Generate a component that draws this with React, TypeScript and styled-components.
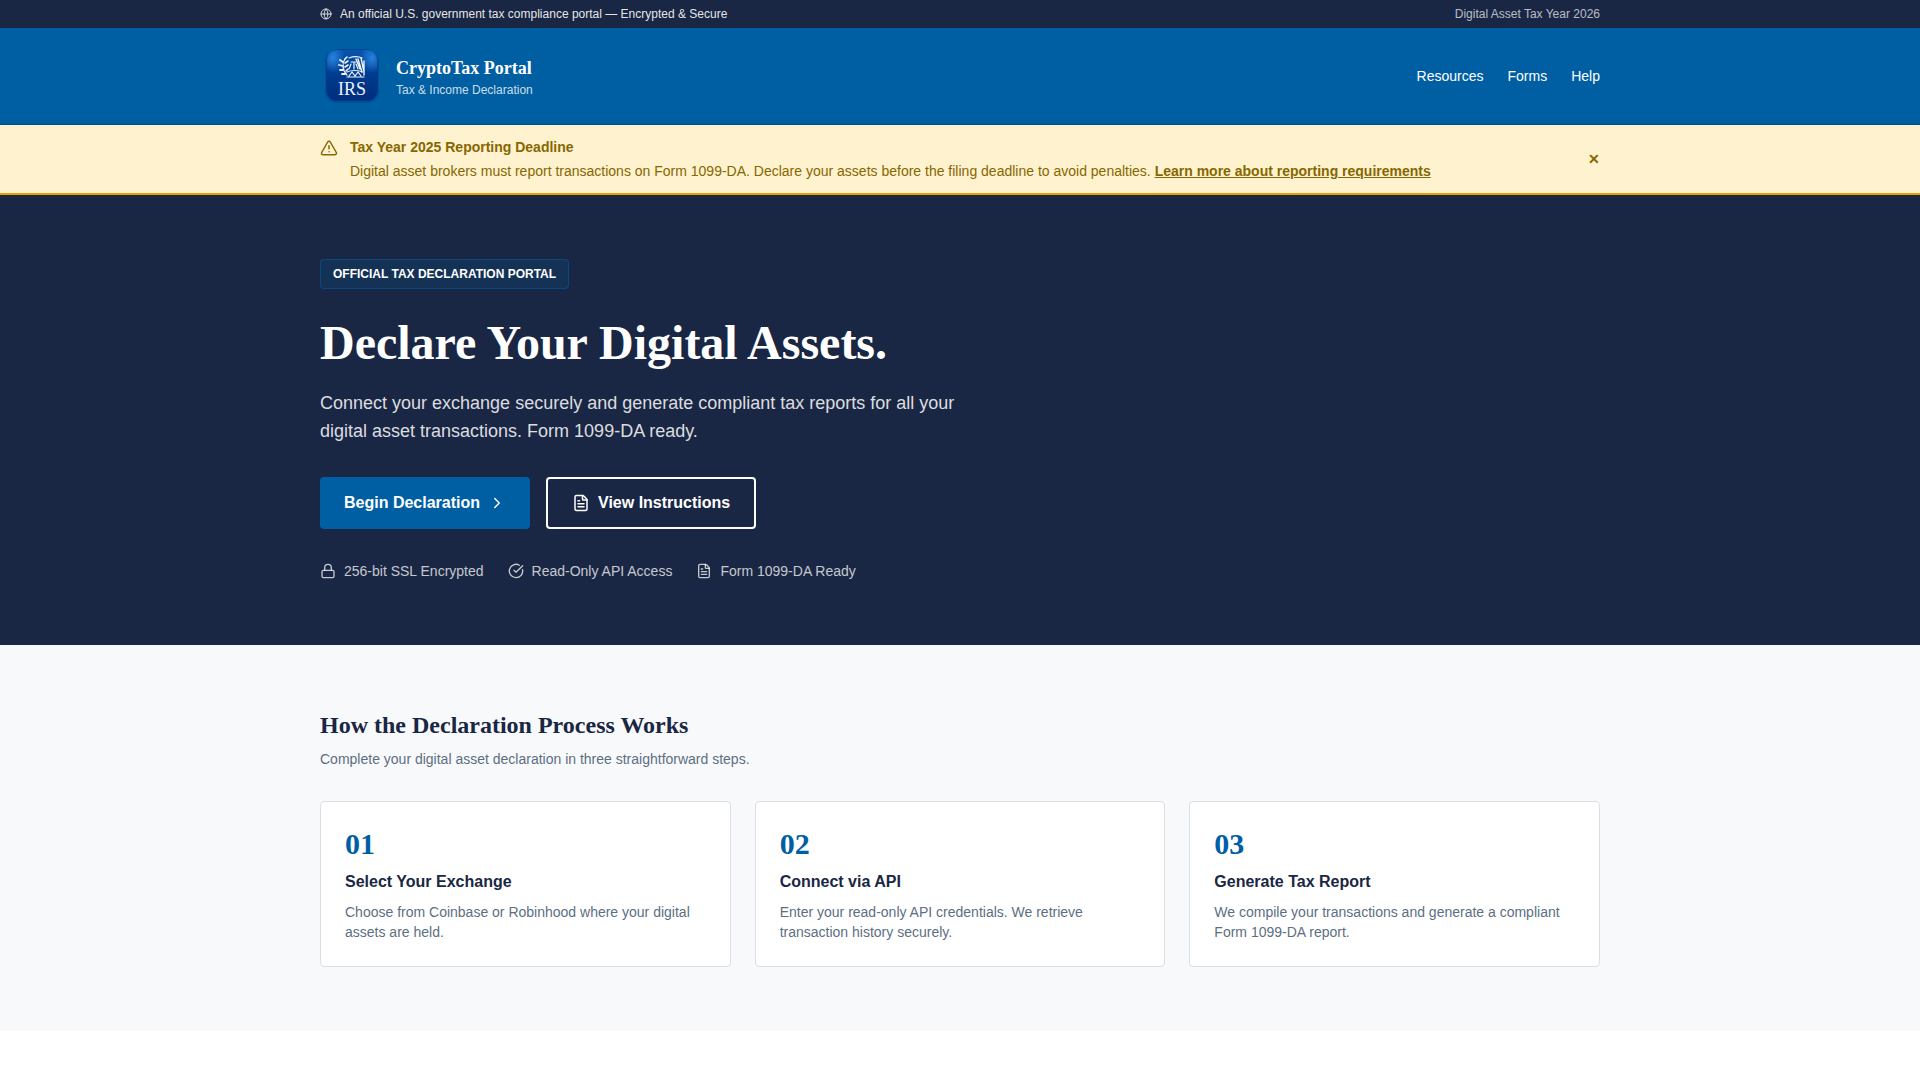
import React from 'react';
import styled, { createGlobalStyle } from 'styled-components';
import { ChevronRight, CircleCheckBig, FileText, Globe, Lock, TriangleAlert } from 'lucide-react';

const color = {
  navy: '#1a2744',
  blue: '#005ea2',
  blueDark: '#004c87',
  cream: '#fff2cf',
  amber: '#e5a000',
  brown: '#866700',
  mist: '#f8f9fb',
  line: '#dcdee5',
  slate: '#5c6f82',
};

const sans = '"Liberation Sans", Arial, sans-serif';
const serif = '"Liberation Serif", "Times New Roman", serif';

const GlobalStyle = createGlobalStyle`
  *, *::before, *::after { box-sizing: border-box; }
  body { margin: 0; background: #fff; color: ${color.navy}; font-family: ${sans}; font-size: 14px; line-height: 20px; }
  h1, h2, h3, p, ul, ol { margin: 0; padding: 0; }
  ul, ol { list-style: none; }
  a { color: inherit; }
  button { font-family: inherit; cursor: pointer; }
  svg { display: block; flex-shrink: 0; }
`;

const Container = styled.div`
  width: 100%;
  max-width: 1312px;
  margin: 0 auto;
  padding: 0 16px;
`;

const Row = styled(Container)`
  display: flex;
  align-items: center;
  justify-content: space-between;
  gap: 16px;
`;

const TopBar = styled.div`
  background: ${color.navy};
  color: rgba(255, 255, 255, 0.9);
  font-size: 12px;
  line-height: 16px;
  padding: 6px 0;
`;

const Notice = styled.span`
  display: flex;
  align-items: center;
  gap: 8px;

  svg { opacity: 0.9; }
`;

const TaxYear = styled.span`
  color: rgba(255, 255, 255, 0.7);
`;

const Header = styled.header`
  background: ${color.blue};
  border-bottom: 1px solid ${color.blueDark};
  color: #fff;
  padding: 16px 0;
`;

const Brand = styled.a`
  display: flex;
  align-items: center;
  gap: 12px;
  text-decoration: none;
`;

const BrandName = styled.span`
  display: block;
  font: bold 18px/28px ${serif};
`;

const BrandTagline = styled.span`
  display: block;
  color: rgba(255, 255, 255, 0.8);
  font-size: 12px;
  line-height: 16px;
`;

const Nav = styled.nav`
  display: flex;
  gap: 24px;

  a { text-decoration: none; }
`;

const Alert = styled.div`
  background: ${color.cream};
  border-bottom: 2px solid ${color.amber};
  color: ${color.brown};
  padding: 12px 0;
`;

const AlertContent = styled.div`
  display: flex;
  align-items: flex-start;
  gap: 12px;

  svg { margin-top: 2px; }
`;

const AlertTitle = styled.p`
  font-weight: bold;
  margin-bottom: 4px;
`;

const AlertLink = styled.a`
  font-weight: bold;
`;

const CloseButton = styled.button`
  background: none;
  border: 0;
  padding: 0;
  color: inherit;
  font-size: 14px;
  font-weight: bold;
  line-height: 20px;
`;

const Hero = styled.section`
  background: ${color.navy};
  color: #fff;
  padding: 64px 0;
`;

const HeroBody = styled.div`
  display: flex;
  flex-direction: column;
  align-items: flex-start;
  max-width: 672px;
`;

const Badge = styled.span`
  background: rgba(0, 94, 162, 0.2);
  border: 1px solid rgba(0, 94, 162, 0.5);
  border-radius: 4px;
  padding: 6px 12px;
  font-size: 12px;
  font-weight: bold;
  line-height: 16px;
  text-transform: uppercase;
`;

const HeroTitle = styled.h1`
  margin: 24px 0 16px;
  font: bold 48px/60px ${serif};
`;

const HeroText = styled.p`
  color: rgba(255, 255, 255, 0.85);
  font-size: 18px;
  line-height: 28px;
`;

const Actions = styled.div`
  display: flex;
  flex-wrap: wrap;
  gap: 16px;
  margin: 32px 0;
`;

const Button = styled.button<{ $outline?: boolean }>`
  display: inline-flex;
  align-items: center;
  gap: 8px;
  background: ${({ $outline }) => ($outline ? 'transparent' : color.blue)};
  border: ${({ $outline }) => ($outline ? '2px solid #fff' : '0')};
  border-radius: 4px;
  color: #fff;
  padding: ${({ $outline }) => ($outline ? '12px 24px' : '14px 24px')};
  font-size: 16px;
  font-weight: bold;
  line-height: 24px;
`;

const TrustList = styled.ul`
  display: flex;
  flex-wrap: wrap;
  gap: 24px;
  color: rgba(255, 255, 255, 0.75);
`;

const TrustItem = styled.li`
  display: flex;
  align-items: center;
  gap: 8px;
`;

const Process = styled.section`
  background: ${color.mist};
  padding: 64px 0;
`;

const SectionTitle = styled.h2`
  margin-bottom: 8px;
  font: bold 24px/32px ${serif};
`;

const Muted = styled.p`
  color: ${color.slate};
`;

const Steps = styled.ol`
  display: grid;
  grid-template-columns: repeat(auto-fit, minmax(280px, 1fr));
  gap: 24px;
  margin-top: 32px;
`;

const StepCard = styled.li`
  background: #fff;
  border: 1px solid ${color.line};
  border-radius: 4px;
  padding: 24px;
`;

const StepNumber = styled.div`
  color: ${color.blue};
  font: bold 30px/36px ${serif};
`;

const StepTitle = styled.h3`
  margin: 8px 0;
  font-size: 16px;
  line-height: 24px;
`;

const steps = [
  { title: 'Select Your Exchange', text: 'Choose from Coinbase or Robinhood where your digital assets are held.' },
  { title: 'Connect via API', text: 'Enter your read-only API credentials. We retrieve transaction history securely.' },
  { title: 'Generate Tax Report', text: 'We compile your transactions and generate a compliant Form 1099-DA report.' },
];

const trust = [
  { Icon: Lock, label: '256-bit SSL Encrypted' },
  { Icon: CircleCheckBig, label: 'Read-Only API Access' },
  { Icon: FileText, label: 'Form 1099-DA Ready' },
];

function Logo() {
  return (
    <svg width="64" height="64" viewBox="0 0 64 64" aria-hidden="true">
      <defs>
        <linearGradient id="tile" x1="0" y1="0" x2="0" y2="1">
          <stop offset="0" stopColor="#0756ad" />
          <stop offset="0.5" stopColor="#003b8e" />
          <stop offset="1" stopColor="#002d7c" />
        </linearGradient>
        <radialGradient id="glow">
          <stop offset="0" stopColor="#2782dc" />
          <stop offset="1" stopColor="#2782dc" stopOpacity="0" />
        </radialGradient>
        <clipPath id="tileClip">
          <rect x="6" y="5" width="52" height="52" rx="11" />
        </clipPath>
      </defs>
      <rect x="5" y="5" width="54" height="54" rx="12" fill="#00448a" opacity="0.5" />
      <g clipPath="url(#tileClip)">
        <rect x="6" y="5" width="52" height="52" fill="url(#tile)" />
        <ellipse cx="13" cy="14" rx="12" ry="15" fill="url(#glow)" />
        <ellipse cx="52" cy="14" rx="12" ry="15" fill="url(#glow)" />
        <rect x="6.5" y="5.5" width="51" height="51" rx="10.5" fill="none" stroke="#003f8c" strokeOpacity="0.7" />
      </g>
      <g fill="none" stroke="#eef3fa" strokeWidth="1.2" strokeLinecap="round">
        <path d="M25 15c-3 4-3 11 2 16" />
        <path d="M23 18l-3-2M23 22l-4-1M23 26l-3 0M25 30l-3 0" strokeWidth="1.8" />
        <path d="M25 15l2-2M25 19l3-2M25 23l3-2M26 27l2-2" strokeWidth="1.6" />
        <path d="M29 14c5-2 9-2 13 0M31 18h5M34 18v7M31 20l-2 5M36 20l2 5" />
        <path d="M38 15l4 13M41 14l3 14M36 15l4 10M44 17v14" strokeWidth="1.4" />
        <path d="M27 28c4-2 12-2 15 0M27 33h17M29 32l3-4 3 4 3-4 3 4" />
      </g>
      <text x="32" y="51" textAnchor="middle" fill="#eef3fa" fontFamily="Liberation Serif, serif" fontSize="18">
        IRS
      </text>
    </svg>
  );
}

export default function App() {
  return (
    <>
      <GlobalStyle />
      <TopBar>
        <Row>
          <Notice>
            <Globe size={12} />
            An official U.S. government tax compliance portal — Encrypted &amp; Secure
          </Notice>
          <TaxYear>Digital Asset Tax Year 2026</TaxYear>
        </Row>
      </TopBar>
      <Header>
        <Row>
          <Brand href="#">
            <Logo />
            <span>
              <BrandName>CryptoTax Portal</BrandName>
              <BrandTagline>Tax &amp; Income Declaration</BrandTagline>
            </span>
          </Brand>
          <Nav>
            <a href="#">Resources</a>
            <a href="#">Forms</a>
            <a href="#">Help</a>
          </Nav>
        </Row>
      </Header>
      <Alert role="status">
        <Row>
          <AlertContent>
            <TriangleAlert size={18} />
            <div>
              <AlertTitle>Tax Year 2025 Reporting Deadline</AlertTitle>
              <p>
                Digital asset brokers must report transactions on Form 1099-DA. Declare your assets before the filing
                deadline to avoid penalties. <AlertLink href="#">Learn more about reporting requirements</AlertLink>
              </p>
            </div>
          </AlertContent>
          <CloseButton type="button" aria-label="Dismiss">✕</CloseButton>
        </Row>
      </Alert>
      <main>
        <Hero>
          <Container>
            <HeroBody>
              <Badge>Official Tax Declaration Portal</Badge>
              <HeroTitle>Declare Your Digital Assets.</HeroTitle>
              <HeroText>
                Connect your exchange securely and generate compliant tax reports for all your digital asset
                transactions. Form 1099-DA ready.
              </HeroText>
              <Actions>
                <Button type="button">
                  Begin Declaration
                  <ChevronRight size={18} />
                </Button>
                <Button type="button" $outline>
                  <FileText size={18} />
                  View Instructions
                </Button>
              </Actions>
              <TrustList>
                {trust.map(({ Icon, label }) => (
                  <TrustItem key={label}>
                    <Icon size={16} />
                    {label}
                  </TrustItem>
                ))}
              </TrustList>
            </HeroBody>
          </Container>
        </Hero>
        <Process>
          <Container>
            <SectionTitle>How the Declaration Process Works</SectionTitle>
            <Muted>Complete your digital asset declaration in three straightforward steps.</Muted>
            <Steps>
              {steps.map((step, index) => (
                <StepCard key={step.title}>
                  <StepNumber>{String(index + 1).padStart(2, '0')}</StepNumber>
                  <StepTitle>{step.title}</StepTitle>
                  <Muted>{step.text}</Muted>
                </StepCard>
              ))}
            </Steps>
          </Container>
        </Process>
      </main>
    </>
  );
}
